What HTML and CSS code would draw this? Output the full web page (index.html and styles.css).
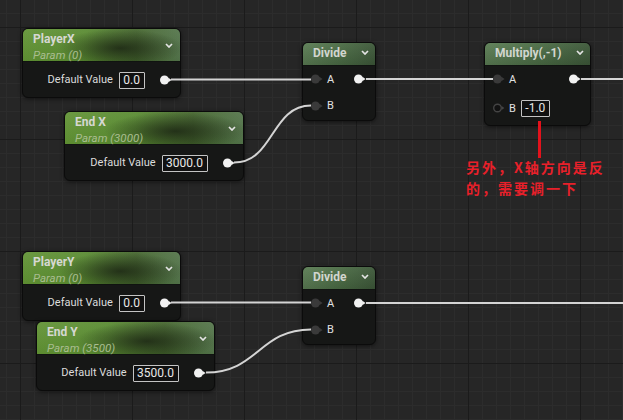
FILE: index.html
```html
<!DOCTYPE html>
<html>
<head>
<meta charset="utf-8">
<link rel="stylesheet" href="styles.css">
</head>
<body>
<div class="canvas">

  <div class="node param n-px">
    <div class="hdr">
      <div class="titles"><div class="title">PlayerX</div><div class="sub">Param (0)</div></div>
      <svg class="chev" viewBox="0 0 8 5"><path d="M1 1 L4 4 L7 1"/></svg>
    </div>
    <div class="pbody">
      <span class="lbl">Default Value</span><span class="box">0.0</span>
      <svg class="pin out" viewBox="0 0 12 10"><circle cx="4.5" cy="5" r="4.5"/><path d="M8.3 2.8 L11.6 5 L8.3 7.2 Z"/></svg>
    </div>
  </div>

  <div class="node param n-ex">
    <div class="hdr">
      <div class="titles"><div class="title">End X</div><div class="sub">Param (3000)</div></div>
      <svg class="chev" viewBox="0 0 8 5"><path d="M1 1 L4 4 L7 1"/></svg>
    </div>
    <div class="pbody">
      <span class="lbl">Default Value</span><span class="box">3000.0</span>
      <svg class="pin out" viewBox="0 0 12 10"><circle cx="4.5" cy="5" r="4.5"/><path d="M8.3 2.8 L11.6 5 L8.3 7.2 Z"/></svg>
    </div>
  </div>

  <div class="node param n-py">
    <div class="hdr">
      <div class="titles"><div class="title">PlayerY</div><div class="sub">Param (0)</div></div>
      <svg class="chev" viewBox="0 0 8 5"><path d="M1 1 L4 4 L7 1"/></svg>
    </div>
    <div class="pbody">
      <span class="lbl">Default Value</span><span class="box">0.0</span>
      <svg class="pin out" viewBox="0 0 12 10"><circle cx="4.5" cy="5" r="4.5"/><path d="M8.3 2.8 L11.6 5 L8.3 7.2 Z"/></svg>
    </div>
  </div>

  <div class="node param n-ey">
    <div class="hdr">
      <div class="titles"><div class="title">End Y</div><div class="sub">Param (3500)</div></div>
      <svg class="chev" viewBox="0 0 8 5"><path d="M1 1 L4 4 L7 1"/></svg>
    </div>
    <div class="pbody">
      <span class="lbl">Default Value</span><span class="box">3500.0</span>
      <svg class="pin out" viewBox="0 0 12 10"><circle cx="4.5" cy="5" r="4.5"/><path d="M8.3 2.8 L11.6 5 L8.3 7.2 Z"/></svg>
    </div>
  </div>

  <div class="node math n-div1">
    <div class="mhdr"><span class="mtitle">Divide</span><svg class="chev" viewBox="0 0 8 5"><path d="M1 1 L4 4 L7 1"/></svg></div>
    <div class="mbody">
      <div class="col">
        <div class="row r1"><svg class="pin in" viewBox="0 0 12 10"><circle cx="4.5" cy="5" r="4.5"/><path d="M8.3 2.8 L11.6 5 L8.3 7.2 Z"/></svg><span class="pl">A</span></div>
        <div class="row r2"><svg class="pin in" viewBox="0 0 12 10"><circle cx="4.5" cy="5" r="4.5"/><path d="M8.3 2.8 L11.6 5 L8.3 7.2 Z"/></svg><span class="pl">B</span></div>
      </div>
      <div class="col">
        <div class="row r1"><svg class="pin out" viewBox="0 0 12 10"><circle cx="4.5" cy="5" r="4.5"/><path d="M8.3 2.8 L11.6 5 L8.3 7.2 Z"/></svg></div>
      </div>
    </div>
  </div>

  <div class="node math n-mul">
    <div class="mhdr"><span class="mtitle">Multiply(,-1)</span><svg class="chev" viewBox="0 0 8 5"><path d="M1 1 L4 4 L7 1"/></svg></div>
    <div class="mbody">
      <div class="col">
        <div class="row r1"><svg class="pin in" viewBox="0 0 12 10"><circle cx="4.5" cy="5" r="4.5"/><path d="M8.3 2.8 L11.6 5 L8.3 7.2 Z"/></svg><span class="pl">A</span></div>
        <div class="row r2m"><svg class="pin hollow" viewBox="0 0 12 10"><circle cx="4.5" cy="5" r="3.8"/><path d="M8.6 3 L11.4 5 L8.6 7 Z"/></svg><span class="pl">B</span><span class="box">-1.0</span></div>
      </div>
      <div class="col">
        <div class="row r1"><svg class="pin out" viewBox="0 0 12 10"><circle cx="4.5" cy="5" r="4.5"/><path d="M8.3 2.8 L11.6 5 L8.3 7.2 Z"/></svg></div>
      </div>
    </div>
  </div>

  <div class="node math n-div2">
    <div class="mhdr"><span class="mtitle">Divide</span><svg class="chev" viewBox="0 0 8 5"><path d="M1 1 L4 4 L7 1"/></svg></div>
    <div class="mbody">
      <div class="col">
        <div class="row r1"><svg class="pin in" viewBox="0 0 12 10"><circle cx="4.5" cy="5" r="4.5"/><path d="M8.3 2.8 L11.6 5 L8.3 7.2 Z"/></svg><span class="pl">A</span></div>
        <div class="row r2"><svg class="pin in" viewBox="0 0 12 10"><circle cx="4.5" cy="5" r="4.5"/><path d="M8.3 2.8 L11.6 5 L8.3 7.2 Z"/></svg><span class="pl">B</span></div>
      </div>
      <div class="col">
        <div class="row r1"><svg class="pin out" viewBox="0 0 12 10"><circle cx="4.5" cy="5" r="4.5"/><path d="M8.3 2.8 L11.6 5 L8.3 7.2 Z"/></svg></div>
      </div>
    </div>
  </div>

  <svg class="wires" viewBox="0 0 623 420">
    <path d="M171 79.5 H311"/>
    <path d="M366 79 H493"/>
    <path d="M581 79 H623"/>
    <path d="M234 162.5 C274 162.5 271 105.5 311 105.5"/>
    <path d="M171 302.5 H311"/>
    <path d="M366 303 H623"/>
    <path d="M206 372.5 C258 372.5 259 329.5 311 329.5"/>
  </svg>

  <div class="callout-line"></div>
  <div class="callout"><div>另外，X轴方向是反</div><div>的，需要调一下</div></div>

</div>
</body>
</html>
```

FILE: styles.css
```css
html, body {
  margin: 0;
  padding: 0;
}
body {
  width: 623px;
  height: 420px;
  overflow: hidden;
  background: #262626;
  font-family: Roboto, "Liberation Sans", sans-serif;
}
.canvas {
  position: relative;
  width: 623px;
  height: 420px;
  background-color: #262626;
  background-image:
    linear-gradient(to right, #1b1b1b 1px, transparent 1px),
    linear-gradient(to bottom, #1b1b1b 1px, transparent 1px),
    linear-gradient(to right, #2c2c2c 1px, transparent 1px),
    linear-gradient(to bottom, #2c2c2c 1px, transparent 1px);
  background-size: 112px 112px, 112px 112px, 14px 14px, 14px 14px;
  background-position: 20px 0, 0 27px, 6px 0, 0 13px;
}

/* nodes */
.node {
  position: absolute;
  box-sizing: border-box;
  background: #161716;
  border: 1px solid #0b0b0b;
  border-radius: 6px;
  box-shadow: 0 1px 4px rgba(0,0,0,0.55);
  overflow: hidden;
}
.n-px { left: 22px; top: 28px; width: 159px; height: 70px; }
.n-ex { left: 64px; top: 111px; width: 180px; height: 70px; }
.n-py { left: 22px; top: 251px; width: 159px; height: 70px; }
.n-ey { left: 36px; top: 321px; width: 179px; height: 70px; }
.n-div1 { left: 302px; top: 42px; width: 74px; height: 79px; }
.n-div2 { left: 302px; top: 266px; width: 74px; height: 79px; }
.n-mul { left: 484px; top: 42px; width: 107px; height: 84px; }

.chev {
  width: 8px;
  height: 5px;
  flex: none;
}
.chev path {
  fill: none;
  stroke: #e4e4e4;
  stroke-width: 1.7;
}

/* param node header */
.hdr {
  height: 33px;
  box-sizing: border-box;
  display: flex;
  align-items: center;
  justify-content: space-between;
  padding: 0 7px 0 10px;
  background:
    radial-gradient(ellipse 40% 60% at 62% 60%, rgba(28,38,20,0.85), rgba(28,38,20,0) 100%),
    linear-gradient(to bottom, rgba(255,255,255,0.07), rgba(0,0,0,0.04)),
    linear-gradient(to right, #609233 0%, #588a30 40%, #43652c 72%, #53744a 100%);
  border-bottom: 1px solid #101310;
}
.titles {
  align-self: flex-start;
  padding-top: 3px;
}
.title {
  font-size: 12px;
  line-height: 14px;
  font-weight: bold;
  color: #d6d8d2;
}
.sub {
  margin-top: 2px;
  font-size: 11.5px;
  line-height: 14px;
  font-style: italic;
  color: #a9bd90;
}
.pbody {
  height: 35px;
  display: flex;
  align-items: center;
  justify-content: flex-end;
  padding-right: 8px;
}
.lbl {
  font-size: 11px;
  color: #dcdcdc;
  margin-right: 6px;
}
.box {
  box-sizing: border-box;
  height: 17px;
  line-height: 15px;
  padding: 0 3.5px;
  border: 1px solid #c4c4c4;
  border-radius: 1px;
  font-size: 12px;
  color: #e8e8e8;
  background: #111;
  margin-top: 2px;
}
.pbody .box { margin-right: 15.5px; }

.pin {
  width: 12px;
  height: 10px;
  flex: none;
}
.pin.out circle, .pin.out path { fill: #f2f2f2; }
.pin.in circle, .pin.in path { fill: #3a3a3a; }
.pin.hollow circle { fill: #121212; stroke: #444; stroke-width: 1.4; }
.pin.hollow path { fill: #444; }

/* math node */
.mhdr {
  height: 23px;
  box-sizing: border-box;
  display: flex;
  align-items: center;
  justify-content: space-between;
  padding: 0 6px 3px 10px;
  background:
    linear-gradient(to bottom, rgba(255,255,255,0.05), rgba(0,0,0,0.12)),
    linear-gradient(to right, #5b7d54 0%, #4a6b44 55%, #3d5839 100%);
  border-bottom: 1px solid #101310;
}
.mtitle {
  font-size: 12px;
  font-weight: bold;
  color: #d2d6cf;
}
.mbody {
  display: flex;
  justify-content: space-between;
  padding: 0 9px 0 8px;
}
.row {
  display: flex;
  align-items: center;
}
.r1 { height: 26px; }
.r2 { height: 27px; }
.r2m { height: 32px; }
.pl {
  font-size: 11px;
  color: #e2e2e2;
  margin-left: 4px;
}
.r2m .box {
  margin-left: 5px;
  margin-top: 0;
}

/* wires */
.wires {
  position: absolute;
  left: 0;
  top: 0;
  width: 623px;
  height: 420px;
  pointer-events: none;
}
.wires path {
  fill: none;
  stroke: #d4d4d4;
  stroke-width: 2;
}

/* annotation */
.callout-line {
  position: absolute;
  left: 538px;
  top: 121px;
  width: 3px;
  height: 37px;
  background: #e3121c;
}
.callout {
  position: absolute;
  left: 466px;
  top: 157px;
  font-family: "Noto Sans CJK SC", "Noto Sans", sans-serif;
  font-size: 14px;
  line-height: 20.5px;
  letter-spacing: 2px;
  font-weight: bold;
  color: #e8202a;
  white-space: nowrap;
}
```
